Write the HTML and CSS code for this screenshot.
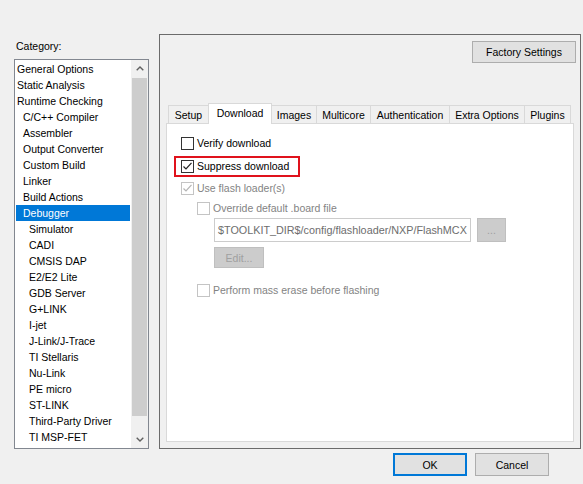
FILE: index.html
```html
<!DOCTYPE html>
<html>
<head>
<meta charset="utf-8">
<link rel="stylesheet" href="styles.css">
</head>
<body>
<div class="dialog">
  <div class="main">
    <div class="left">
      <div class="label">Category:</div>
      <div class="listbox">
        <div class="items">
          <div class="item l0">General Options</div>
          <div class="item l0">Static Analysis</div>
          <div class="item l0">Runtime Checking</div>
          <div class="item l1">C/C++ Compiler</div>
          <div class="item l1">Assembler</div>
          <div class="item l1">Output Converter</div>
          <div class="item l1">Custom Build</div>
          <div class="item l1">Linker</div>
          <div class="item l1">Build Actions</div>
          <div class="item l1 selected">Debugger</div>
          <div class="item l2">Simulator</div>
          <div class="item l2">CADI</div>
          <div class="item l2">CMSIS DAP</div>
          <div class="item l2">E2/E2 Lite</div>
          <div class="item l2">GDB Server</div>
          <div class="item l2">G+LINK</div>
          <div class="item l2">I-jet</div>
          <div class="item l2">J-Link/J-Trace</div>
          <div class="item l2">TI Stellaris</div>
          <div class="item l2">Nu-Link</div>
          <div class="item l2">PE micro</div>
          <div class="item l2">ST-LINK</div>
          <div class="item l2">Third-Party Driver</div>
          <div class="item l2">TI MSP-FET</div>
        </div>
        <div class="scrollbar">
          <div class="arrow">
            <svg width="8" height="5" viewBox="0 0 8 5"><path d="M0.7 4.3 L4 1 L7.3 4.3" fill="none" stroke="#606060" stroke-width="1.4"/></svg>
          </div>
          <div class="track"><div class="thumb"></div></div>
          <div class="arrow">
            <svg width="8" height="5" viewBox="0 0 8 5"><path d="M0.7 0.7 L4 4 L7.3 0.7" fill="none" stroke="#606060" stroke-width="1.4"/></svg>
          </div>
        </div>
      </div>
    </div>
    <div class="panel">
      <div class="factory-row">
        <div class="btn factory">Factory Settings</div>
      </div>
      <div class="tabs">
        <div class="tab w-setup">Setup</div>
        <div class="tab active w-download">Download</div>
        <div class="tab w-images">Images</div>
        <div class="tab w-multicore">Multicore</div>
        <div class="tab w-auth">Authentication</div>
        <div class="tab w-extra">Extra Options</div>
        <div class="tab w-plugins">Plugins</div>
      </div>
      <div class="content">
        <div class="row r-verify">
          <span class="cb"></span><span class="txt">Verify download</span>
        </div>
        <div class="row r-suppress">
          <span class="cb"><svg width="11" height="11" viewBox="0 0 11 11"><path d="M1.5 5.5 L4 8 L9.5 1.8" fill="none" stroke="#222" stroke-width="1.2"/></svg></span><span class="txt">Suppress download</span>
          <span class="highlight"></span>
        </div>
        <div class="row r-flash disabled">
          <span class="cb"><svg width="11" height="11" viewBox="0 0 11 11"><path d="M1.5 5.5 L4 8 L9.5 1.8" fill="none" stroke="#b4b4b4" stroke-width="1.2"/></svg></span><span class="txt">Use flash loader(s)</span>
        </div>
        <div class="row r-override disabled indent">
          <span class="cb"></span><span class="txt">Override default .board file</span>
        </div>
        <div class="field-row">
          <div class="field"><span class="field-text">$TOOLKIT_DIR$/config/flashloader/NXP/FlashMCX</span></div>
          <div class="btn dis browse">...</div>
        </div>
        <div class="edit-row">
          <div class="btn dis edit">Edit...</div>
        </div>
        <div class="row r-erase disabled indent">
          <span class="cb"></span><span class="txt">Perform mass erase before flashing</span>
        </div>
      </div>
    </div>
  </div>
  <div class="buttons">
    <div class="btn ok">OK</div>
    <div class="btn cancel">Cancel</div>
  </div>
</div>
</body>
</html>
```
FILE: styles.css
```css
html, body {
  margin: 0;
  padding: 0;
}
body {
  width: 583px;
  height: 484px;
  overflow: hidden;
  background: #f0f0f0;
  font-family: "Liberation Sans", Arial, sans-serif;
  font-size: 10.5px;
  color: #000;
}
.main {
  display: flex;
  gap: 10px;
  padding: 34px 0 0 14px;
}
.left {
  width: 135px;
  padding-top: 6px;
}
.label {
  line-height: 13px;
  height: 13px;
  padding-left: 2px;
  margin-bottom: 6px;
}
.listbox {
  box-sizing: border-box;
  width: 135px;
  height: 390px;
  border: 1px solid #828790;
  background: #fff;
  display: flex;
}
.items {
  width: 116px;
  padding: 1px 1px 0 1px;
  box-sizing: border-box;
  overflow: hidden;
}
.item {
  height: 16px;
  line-height: 16px;
  white-space: nowrap;
}
.item.l0 { padding-left: 1px; }
.item.l1 { padding-left: 7px; }
.item.l2 { padding-left: 13px; }
.item.selected {
  background: #0078d7;
  color: #fff;
}
.scrollbar {
  width: 17px;
  display: flex;
  flex-direction: column;
  background: #f0f0f0;
}
.arrow {
  height: 17px;
  display: flex;
  align-items: center;
  justify-content: center;
}
.track {
  flex: 1;
  padding: 1px 1px 0 1px;
}
.thumb {
  height: 338px;
  background: #cdcdcd;
}
.panel {
  box-sizing: border-box;
  width: 422px;
  height: 415px;
  border: 1px solid #6b6b6b;
  padding: 6px 7px 0 6px;
}
.factory-row {
  display: flex;
  justify-content: flex-end;
  margin-right: -3px;
}
.btn {
  box-sizing: border-box;
  background: #e1e1e1;
  border: 1px solid #adadad;
  display: flex;
  align-items: center;
  justify-content: center;
  white-space: nowrap;
}
.factory {
  width: 104px;
  height: 22px;
}
.tabs {
  margin-top: 40px;
  height: 20px;
  display: flex;
  align-items: flex-end;
  padding-left: 2px;
}
.tab {
  box-sizing: border-box;
  height: 18px;
  border: 1px solid #d9d9d9;
  border-bottom: none;
  margin-right: -1px;
  text-align: center;
  line-height: 18px;
  background: #f0f0f0;
}
.tab.active {
  height: 21px;
  margin-bottom: -1px;
  background: #fff;
  position: relative;
  z-index: 1;
  line-height: 18px;
}
.w-setup { width: 41px; }
.w-download { width: 64px; }
.w-images { width: 46px; }
.w-multicore { width: 55px; }
.w-auth { width: 80px; }
.w-extra { width: 76px; }
.w-plugins { width: 47px; }
.content {
  box-sizing: border-box;
  width: 408px;
  height: 319px;
  background: #fff;
  border: 1px solid #d9d9d9;
  padding: 13px 0 0 14px;
  display: flex;
  flex-direction: column;
  align-items: flex-start;
}
.row {
  display: flex;
  align-items: center;
  height: 13px;
  position: relative;
}
.row.indent { margin-left: 16px; }
.cb {
  box-sizing: border-box;
  width: 13px;
  height: 13px;
  border: 1px solid #333;
  background: #fff;
  display: flex;
  align-items: center;
  justify-content: center;
}
.txt {
  margin-left: 3px;
  line-height: 13px;
  white-space: nowrap;
}
.disabled .cb { border-color: #c4c4c4; }
.disabled .txt { color: #838383; }
.r-suppress { margin-top: 10px; }
.r-flash { margin-top: 9px; }
.r-override { margin-top: 7px; }
.r-erase { margin-top: 16px; }
.highlight {
  position: absolute;
  left: -7px;
  top: -4px;
  width: 126px;
  height: 21px;
  box-sizing: border-box;
  border: 2px solid #e0121c;
}
.field-row {
  margin-top: 3px;
  margin-left: 33px;
  display: flex;
  gap: 6px;
}
.field {
  box-sizing: border-box;
  width: 257px;
  height: 24px;
  border: 1px solid #cccccc;
  background: #fff;
  color: #6d6d6d;
  line-height: 22px;
  padding-left: 3px;
  white-space: nowrap;
  overflow: hidden;
}
.field-text {
  font-size: 10.8px;
}
.btn.dis {
  background: #cccccc;
  border-color: #bfbfbf;
  color: #a0a0a0;
}
.browse {
  width: 29px;
  height: 24px;
}
.edit-row {
  margin-top: 5px;
  margin-left: 33px;
}
.edit {
  width: 50px;
  height: 21px;
}
.buttons {
  display: flex;
  justify-content: flex-end;
  gap: 8px;
  padding: 4px 34px 0 0;
}
.ok, .cancel {
  width: 74px;
  height: 23px;
}
.ok {
  border: 2px solid #0078d7;
}
```
